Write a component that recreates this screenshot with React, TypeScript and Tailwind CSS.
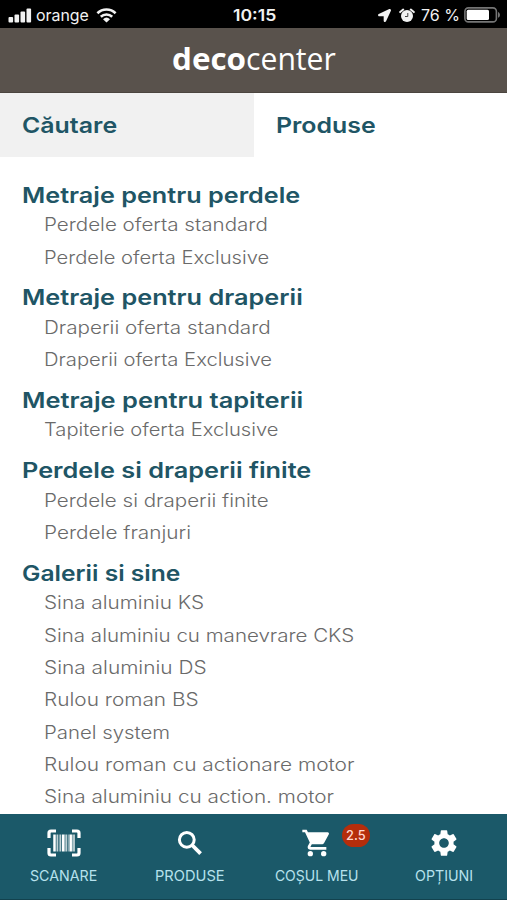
import { useLayoutEffect, useRef, useState } from "react";
import type { ReactNode } from "react";
import { FaLocationArrow } from "react-icons/fa";
import { MdSettings } from "react-icons/md";

/** A single line of text stretched horizontally to a given width. */
function Fit({ text, width, className = "" }: { text: string; width: number; className?: string }) {
  const ref = useRef<HTMLSpanElement>(null);
  const [scale, setScale] = useState(1);
  useLayoutEffect(() => {
    if (ref.current) setScale(width / ref.current.offsetWidth);
  }, [text, width]);
  return (
    <span className="block" style={{ width }}>
      <span
        ref={ref}
        className={`inline-block origin-left whitespace-nowrap ${className}`}
        style={{ transform: `scaleX(${scale})` }}
      >
        {text}
      </span>
    </span>
  );
}

type Item = [string, number];
const sections: { title: Item; items: Item[] }[] = [
  {
    title: ["Metraje pentru perdele", 278],
    items: [["Perdele oferta standard", 224], ["Perdele oferta Exclusive", 225]],
  },
  {
    title: ["Metraje pentru draperii", 281],
    items: [["Draperii oferta standard", 227], ["Draperii oferta Exclusive", 228]],
  },
  {
    title: ["Metraje pentru tapiterii", 281.5],
    items: [["Tapiterie oferta Exclusive", 234]],
  },
  {
    title: ["Perdele si draperii finite", 289.5],
    items: [["Perdele si draperii finite", 225], ["Perdele franjuri", 147.5]],
  },
  {
    title: ["Galerii si sine", 158],
    items: [
      ["Sina aluminiu KS", 160],
      ["Sina aluminiu cu manevrare CKS", 310],
      ["Sina aluminiu DS", 162],
      ["Rulou roman BS", 155],
      ["Panel system", 125.5],
      ["Rulou roman cu actionare motor", 310],
      ["Sina aluminiu cu action. motor", 290.5],
    ],
  },
];

function StatusBar() {
  return (
    <div className="flex h-7 shrink-0 items-center bg-black pt-0.5 text-[#f2f2f2]">
      <div className="flex flex-1 items-center pl-2">
        <svg width="24" height="15" viewBox="0 0 24 15" fill="currentColor">
          <rect x="0.5" y="9" width="4.6" height="5.5" rx="1" />
          <rect x="6.5" y="6.5" width="4.6" height="8" rx="1" />
          <rect x="12.5" y="3.5" width="4.6" height="11" rx="1" />
          <rect x="18.5" y="0.5" width="4.6" height="14" rx="1" />
        </svg>
        <div className="ml-1 text-[16.5px] leading-none">
          <Fit text="orange" width={53} />
        </div>
        <svg className="ml-[7px]" width="21" height="15" viewBox="0 0 21 15" fill="none" stroke="currentColor" strokeWidth="2.6">
          <path d="M1.4 5.2a13 13 0 0 1 18.2 0" />
          <path d="M4.8 8.8a8.2 8.2 0 0 1 11.4 0" />
          <path d="M10.5 14.5 7 11.2a5.2 5.2 0 0 1 7 0Z" fill="currentColor" stroke="none" />
        </svg>
      </div>
      <div className="text-base leading-none font-semibold">
        <Fit text="10:15" width={43} />
      </div>
      <div className="flex flex-1 items-center justify-end pr-1.5">
        <FaLocationArrow size={13} />
        <svg className="ml-2" width="16" height="15" viewBox="0 0 16 15">
          <circle cx="8" cy="8" r="6" fill="currentColor" />
          <path d="M1.2 4.1 4.2 1.6M14.8 4.1 11.8 1.6" stroke="currentColor" strokeWidth="2" strokeLinecap="round" />
          <path d="M8.8 5v3.5H6" stroke="#444" strokeWidth="1" fill="none" />
        </svg>
        <div className="ml-1.5 text-base leading-none">
          <Fit text="76 %" width={39} />
        </div>
        <svg className="ml-1" width="37" height="16" viewBox="0 0 37 16">
          <rect x="0.9" y="0.9" width="31.5" height="14" rx="3.5" fill="none" stroke="#757575" strokeWidth="1.6" />
          <rect x="2.7" y="2.7" width="22.3" height="10.4" rx="1.5" fill="#fff" />
          <path d="M34 5c2.6.8 2.6 5 0 5.8Z" fill="#757575" />
        </svg>
      </div>
    </div>
  );
}

function ScanIcon() {
  return (
    <svg className="ml-0.5" width="34" height="28" viewBox="0 0 34 28" fill="none" stroke="currentColor">
      <path
        d="M2 9V4Q2 2 4 2H9M25 2H30Q32 2 32 4V9M32 19v5Q32 26 30 26H25M9 26H4Q2 26 2 24V19"
        strokeWidth="3.2"
      />
      <path d="M7.5 5.5v17M16.2 5.5v17M23.7 5.5v17" strokeWidth="2.5" />
      <path d="M10.4 5.5v17M13.3 5.5v17M19.4 5.5v17M27 5.5v17" strokeWidth="1.8" opacity="0.72" />
      <path d="M17.9 5.5v17M21.7 5.5v17M25.4 5.5v17" strokeWidth="1" opacity="0.55" />
    </svg>
  );
}

function SearchIcon() {
  return (
    <svg width="26" height="26" viewBox="0 0 26 26" fill="none" stroke="currentColor">
      <circle cx="9.8" cy="9.8" r="7.4" strokeWidth="3" />
      <path d="m15 15 8.6 8.6" strokeWidth="3.8" />
    </svg>
  );
}

function CartIcon() {
  return (
    <svg width="32" height="32" viewBox="0 0 24 24" fill="currentColor">
      <path d="M1 2v2h2l3.6 7.59-1.35 2.45C4.52 15.38 5.48 17 7 17h12v-2H7.42c-.14 0-.25-.11-.25-.25l.03-.12.9-1.63h7.45c.75 0 1.41-.41 1.75-1.03l3.58-6.49A1 1 0 0 0 20 4H5.21l-.94-2Z" />
      <circle cx="7" cy="20" r="2" />
      <circle cx="17" cy="20" r="2" />
    </svg>
  );
}

function Tab({ icon, label, width, badge }: { icon: ReactNode; label: string; width: number; badge?: string }) {
  return (
    <div className="relative flex flex-1 flex-col items-center pt-[13px]">
      <div className="flex h-8 items-center text-white">{icon}</div>
      <div className="mt-[7px] text-[14px] leading-5 text-[#b7e2ed]">
        <Fit text={label} width={width} />
      </div>
      {badge && (
        <div className="absolute top-2.5 left-[88px] flex h-[23px] w-7 items-center justify-center rounded-full bg-[#b52d0b] text-[13.5px] leading-none font-medium text-[#ffd8cf]">
          <Fit text={badge} width={20} />
        </div>
      )}
    </div>
  );
}

export default function App() {
  return (
    <div className="flex h-[900px] w-[507px] flex-col overflow-hidden bg-white font-['Inter','Liberation_Sans',sans-serif]">
      <StatusBar />
      <header className="flex h-[64.5px] shrink-0 items-center justify-center border-b border-[#4b453f] bg-[#59524c] pb-0.5 font-['Open_Sans','Noto_Sans',sans-serif] text-[31px] leading-none text-white">
        <Fit text="deco" width={74} className="font-bold" />
        <Fit text="center" width={89.5} className="font-medium" />
      </header>
      <div className="flex h-[64.5px] shrink-0 text-[22px] font-semibold text-[#205565]">
        <div className="flex w-1/2 items-center bg-[#f1f1f1] pt-0.5 pl-[22px]">
          <Fit text="Căutare" width={95} />
        </div>
        <div className="flex w-1/2 items-center pt-0.5 pl-[22px]">
          <Fit text="Produse" width={99.5} />
        </div>
      </div>
      <main className="flex-1 overflow-hidden pt-[14.4px]">
        {sections.map(({ title, items }) => (
          <section key={title[0]}>
            <h2 className="h-[37.8px] pt-[10.2px] pl-[22px] text-[21.5px] leading-[27.6px] font-semibold text-[#205565]">
              <Fit text={title[0]} width={title[1]} />
            </h2>
            <ul className="pl-[43.5px] text-[18px] leading-[32.4px] font-light text-[#6a6a6a]">
              {items.map(([text, width]) => (
                <li key={text} className="h-[32.4px]">
                  <Fit text={text} width={width} />
                </li>
              ))}
            </ul>
          </section>
        ))}
      </main>
      <nav className="flex h-[86px] shrink-0 border-b border-[#12424e] bg-[#1b5969]">
        <Tab icon={<ScanIcon />} label="SCANARE" width={67} />
        <Tab icon={<SearchIcon />} label="PRODUSE" width={70} />
        <Tab icon={<CartIcon />} label="COȘUL MEU" width={84} badge="2.5" />
        <Tab icon={<MdSettings size={32} />} label="OPȚIUNI" width={58} />
      </nav>
    </div>
  );
}
